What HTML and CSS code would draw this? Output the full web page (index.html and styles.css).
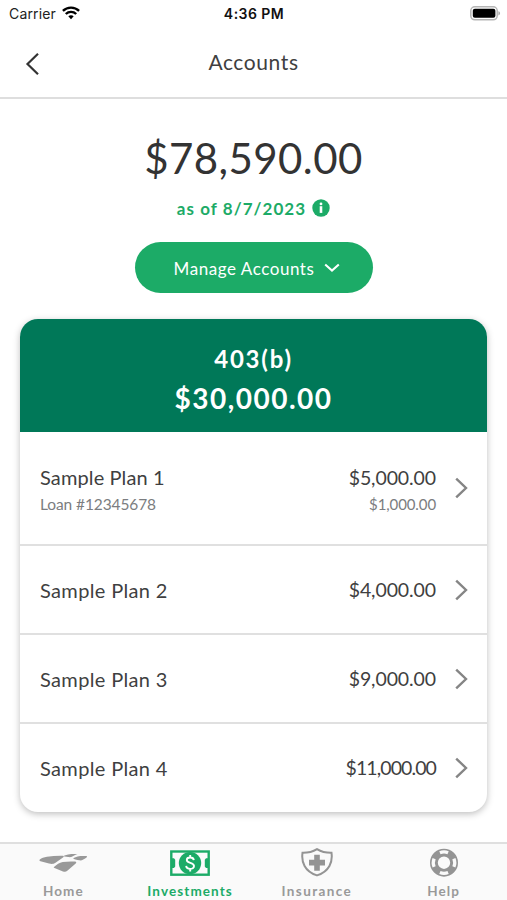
FILE: index.html
```html
<!DOCTYPE html>
<html lang="en">
<head>
<meta charset="utf-8">
<title>Accounts</title>
<link rel="stylesheet" href="styles.css">
</head>
<body>
<div class="screen">
  <div class="status">
    <div class="carrier"><span class="carrier-name">Carrier</span>
      <svg width="18" height="14" viewBox="0 0 18 14" fill="none" stroke="#000" stroke-width="2.4"><path d="M.9 4.8C5.4.5 12.6.5 17.1 4.8"/><path d="M3.8 8c2.9-2.8 7.5-2.8 10.4 0"/><path d="M6.3 10.3c1.5-1.5 3.9-1.5 5.4 0L9 13.2z" fill="#000" stroke="none"/></svg>
    </div>
    <div class="time">4:36 PM</div>
    <svg class="battery" width="31" height="15" viewBox="0 0 31 15"><rect x=".8" y=".8" width="26.4" height="13" rx="4" fill="#fff" stroke="#b5b5b5" stroke-width="1.5"/><rect x="2.8" y="2.8" width="22.6" height="9" rx="2" fill="#000"/><path d="M28.4 5.2c2.2.7 2.2 3.5 0 4.2z" fill="#aaa"/></svg>
  </div>
  <header class="header">
    <svg class="back" width="15" height="24" viewBox="0 0 15 24" fill="none" stroke="#333" stroke-width="2.2"><path d="M13 1.8 2.5 12 13 22.2"/></svg>
    <h1 class="title">Accounts</h1>
  </header>
  <main class="main">
    <div class="total">$78,590.00</div>
    <div class="date"><span class="date-text">as of 8/7/2023</span>
      <svg width="18" height="18" viewBox="0 0 18 18"><circle cx="9" cy="9" r="8.7" fill="#1cab67"/><g fill="#fff"><circle cx="9" cy="4.9" r="1.4"/><path d="M7.700 7.2h2.600v6.700H7.700z"/></g></svg>
    </div>
    <button class="manage"><span class="manage-text">Manage Accounts</span>
      <svg width="16" height="10" viewBox="0 0 16 10" fill="none" stroke="#fff" stroke-width="2.1"><path d="m1.2 1.5 6.8 6 6.8-6"/></svg>
    </button>
    <section class="card">
      <div class="card-head"><div class="plan-type">403(b)</div><div class="plan-total">$30,000.00</div></div>
      <div class="row row-loan">
        <div class="info"><div class="name name-first">Sample Plan 1</div><div class="loan">Loan #12345678</div></div>
        <div class="info values"><div class="amount">$5,000.00</div><div class="loan loan-amount">$1,000.00</div></div>
        <svg class="chev" width="13" height="22" viewBox="0 0 13 22"><path d="m1.2 1.6 9.8 9.4-9.8 9.4"/></svg>
      </div>
      <div class="row">
        <div class="name">Sample Plan 2</div><div class="values amount">$4,000.00</div>
        <svg class="chev" width="13" height="22" viewBox="0 0 13 22"><path d="m1.2 1.6 9.8 9.4-9.8 9.4"/></svg>
      </div>
      <div class="row">
        <div class="name">Sample Plan 3</div><div class="values amount">$9,000.00</div>
        <svg class="chev" width="13" height="22" viewBox="0 0 13 22"><path d="m1.2 1.6 9.8 9.4-9.8 9.4"/></svg>
      </div>
      <div class="row">
        <div class="name">Sample Plan 4</div><div class="values amount amount-wide">$11,000.00</div>
        <svg class="chev" width="13" height="22" viewBox="0 0 13 22"><path d="m1.2 1.6 9.8 9.4-9.8 9.4"/></svg>
      </div>
    </section>
  </main>
  <nav class="nav">
    <div class="tab">
      <div class="icon"><svg width="49" height="30" viewBox="0 0 49 30" fill="#999"><path d="M.8 11.500C2.500 10 5 9.200 8 8.700c5-.8 10-1.100 15.600-1 1.400.3 1.400 1.200.4 1.900l-7.500 5.200c-2.300 1.600-4.300 1.300-6.500.7l-8.500-2.300c-1-.3-1.400-1-.7-1.700z"/><path d="M23.800 8.200c3.800-2 9-2.500 14.700-2.200-2 .4-3.800 1.900-5.600 2.700-1.300.6-2.400.5-3.700.3z"/><path d="M34.600 10c2.900-1.700 6.400-2.300 12.600-2 1.100.1 1.200.9.300 1.500-1.900 1.200-3.500 2.600-5.600 2.900-1.400 0-5.300-1-7-1.500-.5-.2-.7-.6-.3-.9z"/><path d="M15.300 18.700c2.400-1.900 5-3.900 8.500-4.600 3.700-.7 7.500-.8 12.200-.6 1.400.2 1.700 1.100.7 2l-8.400 7.300c-1.400 1.200-2.700 1.200-4.300.6l-8.500-3.300c-.8-.4-1-.9-.2-1.400z"/></svg></div>
      <span class="label">Home</span>
    </div>
    <div class="tab active">
      <div class="icon"><svg width="40" height="30" viewBox="0 0 40 30"><rect x="1.300" y="3.500" width="37.400" height="23.200" fill="#fafafa" stroke="#1cab67" stroke-width="2.400"/><g fill="#1cab67"><path d="M1 10.300h3l1.200 1.500v6.600L4 19.900H1zM39 10.300h-3l-1.200 1.500v6.600l1.200 1.500h3z"/><circle cx="20" cy="15.100" r="11.200"/></g><path d="M23.800 12.100c-.4-3.500-7-3.400-7-.1 0 3.700 7.200 2.200 7.200 6.100 0 3.800-7.500 3.700-7.800-.2M20.200 7.100v3M20.200 20.500v3" fill="none" stroke="#fff" stroke-width="1.900"/></svg></div>
      <span class="label">Investments</span>
    </div>
    <div class="tab">
      <div class="icon"><svg width="34" height="30" viewBox="0 0 34 30"><path d="M17 1.100c4.300 2.600 8.900 3.800 14.500 3.700 1.300 8.900-2 18.600-14.500 22.600C4.500 23.400 1.200 13.700 2.500 4.800 8.100 4.900 12.700 3.700 17 1.100z" fill="none" stroke="#949494" stroke-width="2"/><path d="M14.200 6.700h5.600v5.100H25v5.600h-5.200v5.300h-5.600v-5.300H9v-5.600h5.200z" fill="#949494"/></svg></div>
      <span class="label label-insurance">Insurance</span>
    </div>
    <div class="tab">
      <div class="icon"><svg width="30" height="30" viewBox="0 0 30 30"><circle cx="15" cy="14.700" r="10.100" fill="none" stroke="#949494" stroke-width="7.800"/><g fill="none" stroke="#fafafa" stroke-width="3.300"><path d="M10.900 4.800a10.700 10.700 0 0 1 8.200 0M10.900 24.600a10.700 10.700 0 0 0 8.200 0M5.100 10.600a10.700 10.700 0 0 0 0 8.200M24.900 10.600a10.700 10.700 0 0 1 0 8.200"/></g></svg></div>
      <span class="label">Help</span>
    </div>
  </nav>
</div>
</body>
</html>
```
FILE: styles.css
```css
* { box-sizing: border-box; }
body { margin: 0; background: #fff; color: #3f3f41; font-family: Lato, "Open Sans", sans-serif; }
svg { display: block; flex: none; }
.screen { width: 507px; height: 900px; display: flex; flex-direction: column; overflow: hidden; }

.status { height: 28px; padding: 0 6px 0 9px; display: grid; grid-template-columns: 1fr auto 1fr; align-items: center; font-family: Inter, sans-serif; font-size: 14px; color: #222; }
.carrier { display: flex; align-items: center; gap: 6px; letter-spacing: .15px; margin-top: -2px; }
.carrier svg { margin-top: -1px; }
.time { font-weight: 600; font-size: 14px; letter-spacing: .45px; color: #111; margin-top: -2px; padding-right: 2px; }
.battery { justify-self: end; margin-top: -2px; }

.header { height: 71px; border-bottom: 2px solid #dedede; display: grid; grid-template-columns: 60px 1fr 60px; align-items: center; }
.back { margin-left: 25px; margin-top: 2px; }
.title { margin: -2px 0 0; text-align: center; font-weight: 400; font-size: 21px; letter-spacing: .6px; }

.main { flex: 1; display: flex; flex-direction: column; align-items: center; padding: 33px 20px 0; }
.total { height: 52px; line-height: 52px; font-size: 42px; letter-spacing: .4px; color: #333; }
.date { height: 24px; margin-top: 12px; display: flex; align-items: center; gap: 6px; color: #1cab67; font-weight: 700; }
.date-text { font-size: 17px; letter-spacing: 1.05px; }
.manage { width: 238px; height: 51px; margin-top: 22px; padding: 0 0 0 7px; border: 0; border-radius: 26px; background: #1cab67; color: #fff; display: flex; justify-content: center; align-items: center; gap: 10px; font: 400 17px Lato, sans-serif; }
.manage-text { letter-spacing: .55px; margin-top: 2px; }

.card { width: 467px; height: 493px; margin-top: 26px; border-radius: 18px; overflow: hidden; background: #fff; box-shadow: 0 2px 7px rgba(0,0,0,.26); }
.card-head { height: 113px; padding-top: 23px; background: #007858; color: #fff; text-align: center; font-weight: 700; }
.plan-type { height: 34px; line-height: 34px; font-size: 24px; letter-spacing: 1.8px; }
.plan-total { height: 44px; line-height: 44px; font-size: 28px; letter-spacing: 1.5px; }
.row { height: 89px; padding: 0 19px 0 20px; display: flex; align-items: center; border-top: 2px solid #e0e0e0; }
.row-loan { height: 112px; border-top: 0; }
.info { display: flex; flex-direction: column; gap: 3px; padding-top: 2px; }
.name { font-size: 20px; line-height: 26px; letter-spacing: .35px; }
.name-first { letter-spacing: .12px; }
.values { margin-left: auto; text-align: right; }
.amount { font-size: 19.500px; line-height: 28px; letter-spacing: -.1px; }
.row > .amount { padding-top: 1px; }
.info > .amount { margin-bottom: -2px; }
.amount-wide { letter-spacing: -.9px; }
.loan { font-size: 15.500px; line-height: 22px; letter-spacing: -.1px; color: #7b7d80; }
.loan-amount { font-size: 15px; }
.chev { margin-left: 19px; fill: none; stroke: #858585; stroke-width: 2.400; }

.nav { height: 58px; background: #fafafa; border-top: 2px solid #dfdfdf; display: grid; grid-template-columns: repeat(4, 1fr); }
.tab { display: flex; flex-direction: column; align-items: center; color: #999; }
.icon { height: 38px; padding-top: 4px; }
.label { font-weight: 700; font-size: 13.500px; line-height: 18px; letter-spacing: 1.1px; }
.label-insurance { letter-spacing: 1.4px; }
.active { color: #1cab67; }
```
